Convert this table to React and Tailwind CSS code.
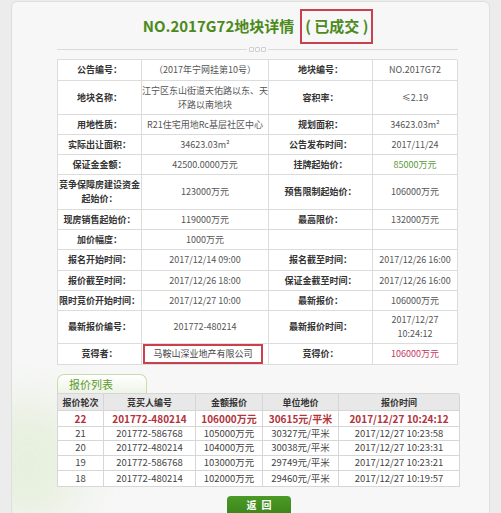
import React from "react";

// 地块详情 — rows of [label, value, label, value]
const rows = [
  { h: 1, cells: ["公告编号：", "（2017年宁网挂第10号）", "地块编号：", "NO.2017G72"] },
  { h: 2, cells: ["地块名称：", ["江宁区东山街道天佑路以东、天", "环路以南地块"], "容积率：", "≤2.19"] },
  { h: 1, cells: ["用地性质：", "R21住宅用地Rc基层社区中心", "规划面积：", "34623.03m²"] },
  { h: 1, cells: ["实际出让面积：", "34623.03m²", "公告发布时间：", "2017/11/24"] },
  { h: 1, cells: ["保证金金额：", "42500.0000万元", "挂牌起始价：", "85000万元"], green: true },
  { h: 2, cells: [["竞争保障房建设资金", "起始价："], "123000万元", "预售限制起始价：", "106000万元"] },
  { h: 1, cells: ["现房销售起始价：", "119000万元", "最高限价：", "132000万元"] },
  { h: 1, cells: ["加价幅度：", "1000万元", "", ""] },
  { h: 1, cells: ["报名开始时间：", "2017/12/14 09:00", "报名截至时间：", "2017/12/26 16:00"] },
  { h: 1, cells: ["报价截至时间：", "2017/12/26 18:00", "保证金截至时间：", "2017/12/26 16:00"] },
  { h: 1, cells: ["限时竞价开始时间：", "2017/12/27 10:00", "最新报价：", "106000万元"] },
  { h: 2, cells: ["最新报价编号：", "201772-480214", "最新报价时间：", ["2017/12/27", "10:24:12"]] },
];

const bids = [
  ["22", "201772-480214", "106000万元", "30615元/平米", "2017/12/27 10:24:12"],
  ["21", "201772-586768", "105000万元", "30327元/平米", "2017/12/27 10:23:58"],
  ["20", "201772-480214", "104000万元", "30038元/平米", "2017/12/27 10:23:31"],
  ["19", "201772-586768", "103000万元", "29749元/平米", "2017/12/27 10:23:21"],
  ["18", "201772-480214", "102000万元", "29460元/平米", "2017/12/27 10:19:57"],
];

function Lines({ v }) {
  if (Array.isArray(v)) {
    return (
      <span>
        {v.map((l, i) => (
          <span key={i} className="block">{l}</span>
        ))}
      </span>
    );
  }
  return <span>{v}</span>;
}

function Cell({ children, label, className = "" }) {
  return (
    <div
      className={`flex items-center justify-center text-center border-r border-b border-[#dcdcdc] bg-white leading-[14px] ${
        label ? "font-bold text-[#333]" : "text-[#555]"
      } ${className}`}
    >
      {children}
    </div>
  );
}

export default function App() {
  return (
    <div className="relative h-[513px] overflow-hidden bg-[#ececec] font-['Noto_Sans_CJK_SC',sans-serif]">
      <div className="relative mx-[11px] mt-[1px] h-[540px] rounded-t-[6px] border border-[#dedede] bg-[#f7f7f7] pl-[45px] overflow-hidden">
        {/* faint green swoosh in the background */}
        <div className="absolute left-[-40px] top-[395px] h-[130px] w-[110px] rounded-full bg-[#e3eed8] opacity-80 blur-xl" />

        <div className="relative w-[402px]">
          {/* title */}
          <div className="mt-[7px] flex h-[35px] items-center justify-center">
            <span className="text-[15px] font-bold text-[#4c8a1c]">NO.2017G72地块详情</span>
            <span className="ml-[6px] flex h-[35px] w-[73px] items-center justify-center border-2 border-[#c9404e] text-[15px] font-bold text-[#4c8a1c]">
              ( 已成交 )
            </span>
          </div>

          {/* divider */}
          <div className="mt-[3px] flex w-[401px] items-center">
            <div className="h-px flex-1 bg-[#dadada]" />
            <div className="mx-[2px] flex gap-[1px]">
              <span className="h-[5px] w-[5px] rounded-[1px] border border-[#cfcfcf]" />
              <span className="h-[5px] w-[5px] rounded-[1px] border border-[#cfcfcf]" />
              <span className="h-[5px] w-[5px] rounded-[1px] border border-[#cfcfcf]" />
            </div>
            <div className="h-px flex-1 bg-[#dadada]" />
          </div>

          {/* details table */}
          <div className="mt-[7px] grid w-[400px] grid-cols-[84px_127px_104px_85px] grid-rows-[21px_34px_20px_20px_20px_35px_20px_20px_21px_20px_20px_33px_21px] border-l border-t border-[#dcdcdc] text-[9px]">
            {rows.map((r, i) => (
              <React.Fragment key={i}>
                <Cell label>
                  <Lines v={r.cells[0]} />
                </Cell>
                <Cell>
                  <Lines v={r.cells[1]} />
                </Cell>
                <Cell label>
                  <Lines v={r.cells[2]} />
                </Cell>
                <Cell className={r.green ? "!text-[#5c9a3c]" : ""}>
                  <Lines v={r.cells[3]} />
                </Cell>
              </React.Fragment>
            ))}
            <Cell label>竞得者：</Cell>
            <div className="flex items-center border-r border-b border-[#dcdcdc] bg-white">
              <div className="ml-px flex h-[20px] w-[120px] items-center justify-center border-2 border-[#c9404e] text-[9px] text-[#444]">
                马鞍山深业地产有限公司
              </div>
            </div>
            <Cell label>竞得价：</Cell>
            <Cell className="!text-[#c23a5e]">106000万元</Cell>
          </div>

          {/* bid list tab */}
          <div className="mt-[9px] flex h-[19px] w-[90px] items-center rounded-t-[7px] border border-b-0 border-[#c9dcae] bg-gradient-to-b from-white to-[#eef4e6] pl-[11px] text-[11px] text-[#5d9a2c]">
            报价列表
          </div>

          {/* bid table */}
          <div className="grid w-[402px] grid-cols-[46px_92px_67px_76px_121px] grid-rows-[17px_16px_14px_15px_15px_16px] border-l border-t border-[#d6d6d6] text-[9.5px] leading-none">
            {["报价轮次", "竞买人编号", "金额报价", "单位地价", "报价时间"].map((h) => (
              <div
                key={h}
                className="flex items-center justify-center border-r border-b border-[#d6d6d6] bg-[#e8e8e8] text-[9px] font-bold text-[#333]"
              >
                {h}
              </div>
            ))}
            {bids.map((b, i) =>
              b.map((v, j) => (
                <div
                  key={`${i}-${j}`}
                  className={`flex items-center justify-center border-r border-b border-[#d6d6d6] bg-white ${
                    i === 0 ? "text-[10px] font-bold text-[#b3333c]" : "text-[#444]"
                  }`}
                >
                  {v}
                </div>
              ))
            )}
          </div>

          {/* back button */}
          <div className="mt-[9px] flex justify-center pl-[2px]">
            <button className="flex h-[24px] w-[64px] items-start justify-center rounded-t-[4px] bg-gradient-to-b from-[#4c9a26] to-[#377f16] pt-[2px] pl-[5px] text-[10px] font-bold leading-[13px] tracking-[5px] text-white">
              返回
            </button>
          </div>
        </div>
      </div>
    </div>
  );
}
